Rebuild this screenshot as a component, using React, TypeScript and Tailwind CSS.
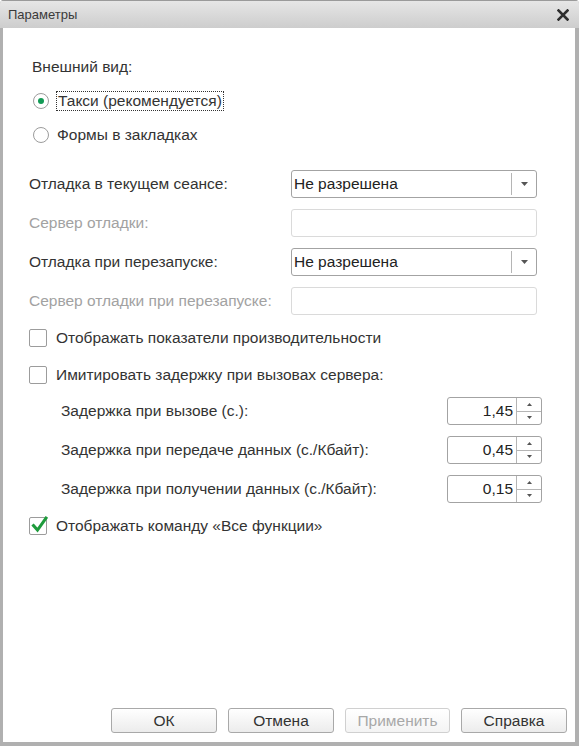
import { ReactNode } from "react";

const font = { fontFamily: '"Liberation Sans", Arial, sans-serif' };

const Radio = ({ checked, label, focused }: { checked?: boolean; label: string; focused?: boolean }) => (
  <div className="flex items-center h-[22px]">
    <span className="w-[16px] h-[16px] rounded-full border border-[#9c9c9c] bg-white flex items-center justify-center">
      {checked && <span className="w-[6px] h-[6px] rounded-full bg-[#129a55]" />}
    </span>
    <span
      className={
        focused
          ? "ml-[7px] px-[1px] border border-dotted border-[#333] leading-[18px]"
          : "ml-[8px] leading-[18px]"
      }
    >
      {label}
    </span>
  </div>
);

const Checkbox = ({ checked, label }: { checked?: boolean; label: string }) => (
  <div className="flex items-center h-[22px]">
    <span className="relative w-[18px] h-[18px] rounded-[2px] border border-[#9c9c9c] bg-white">
      {checked && (
        <svg className="absolute left-[1px] top-[-3px]" width="18" height="19" viewBox="0 0 18 19">
          <path d="M2.5 10.5 L6.5 15 L15 3" fill="none" stroke="#1e9b3c" strokeWidth="3" strokeLinecap="square" />
        </svg>
      )}
    </span>
    <span className="ml-[9px]">{label}</span>
  </div>
);

const Select = ({ value }: { value: string }) => (
  <div className="flex w-[246px] h-[28px] rounded-[3px] border border-[#a3a3a3] bg-white">
    <div className="flex-1 flex items-center pl-[2px] text-[#222]">{value}</div>
    <div className="w-[25px] border-l border-[#b5b5b5] my-[2px] flex items-center justify-center">
      <svg width="7" height="4" viewBox="0 0 7 4">
        <path d="M0 0 H7 L3.5 4 Z" fill="#555" />
      </svg>
    </div>
  </div>
);

const DisabledInput = () => (
  <div className="w-[246px] h-[28px] rounded-[3px] border border-[#dadada] bg-white" />
);

const Row = ({ label, disabled, children }: { label: string; disabled?: boolean; children: ReactNode }) => (
  <div className="flex items-center h-[28px] mt-[11px]">
    <div className={disabled ? "w-[262px] text-[#a2a2a2]" : "w-[262px]"}>{label}</div>
    {children}
  </div>
);

const Spin = ({ label, value }: { label: string; value: string }) => (
  <div className="flex items-center h-[28px] mt-[11px] pl-[32px]">
    <div className="w-[386px]">{label}</div>
    <div className="flex w-[95px] h-[28px] rounded-[3px] border border-[#a3a3a3] bg-white">
      <div className="flex-1 flex items-center justify-end pr-[3px] text-[#222]">{value}</div>
      <div className="w-[25px] border-l border-[#b5b5b5] flex flex-col">
        <div className="flex-1 flex items-center justify-center border-b border-[#b5b5b5]">
          <svg width="5" height="3" viewBox="0 0 5 3">
            <path d="M0 3 H5 L2.5 0 Z" fill="#555" />
          </svg>
        </div>
        <div className="flex-1 flex items-center justify-center">
          <svg width="5" height="3" viewBox="0 0 5 3">
            <path d="M0 0 H5 L2.5 3 Z" fill="#555" />
          </svg>
        </div>
      </div>
    </div>
  </div>
);

const Button = ({ children, disabled }: { children: string; disabled?: boolean }) => (
  <button
    className={
      disabled
        ? "w-[105px] h-[25px] rounded-[3px] border border-[#d0d0d0] bg-gradient-to-b from-white to-[#f4f4f4] text-[#a8a8a8]"
        : "w-[106px] h-[25px] rounded-[3px] border border-[#a9a9a9] bg-gradient-to-b from-white to-[#ececec] text-[#333]"
    }
  >
    {children}
  </button>
);

export default function App() {
  return (
    <div
      className="w-[579px] h-[746px] flex flex-col bg-[#b0b0b0] rounded-t-[4px] overflow-hidden text-[15.5px] text-[#333]"
      style={font}
    >
      <div className="h-[28px] flex items-center justify-between pl-[8px] pr-[10px] bg-gradient-to-b from-[#e6e6e6] to-[#cdcdcd] border-t border-[#9a9a9a]">
        <span className="text-[13px] text-[#3a3a3a]">Параметры</span>
        <svg width="12" height="12" viewBox="0 0 12 12">
          <path d="M1.5 1.5 L10.5 10.5 M10.5 1.5 L1.5 10.5" stroke="#2d2d2d" strokeWidth="2.6" strokeLinecap="square" />
        </svg>
      </div>
      <div className="flex-1 flex flex-col bg-white ml-[3px] mr-[4px] mb-[4px] pl-[26px]">
        <div className="mt-[28px] ml-[3px] h-[22px] flex items-center">Внешний вид:</div>
        <div className="ml-[4px] mt-[12px]">
          <Radio checked focused label="Такси (рекомендуется)" />
        </div>
        <div className="ml-[4px] mt-[12px]">
          <Radio label="Формы в закладках" />
        </div>
        <div className="mt-[13px]" />
        <Row label="Отладка в текущем сеансе:">
          <Select value="Не разрешена" />
        </Row>
        <Row label="Сервер отладки:" disabled>
          <DisabledInput />
        </Row>
        <Row label="Отладка при перезапуске:">
          <Select value="Не разрешена" />
        </Row>
        <Row label="Сервер отладки при перезапуске:" disabled>
          <DisabledInput />
        </Row>
        <div className="mt-[12px]">
          <Checkbox label="Отображать показатели производительности" />
        </div>
        <div className="mt-[15px]">
          <Checkbox label="Имитировать задержку при вызовах сервера:" />
        </div>
        <Spin label="Задержка при вызове (с.):" value="1,45" />
        <Spin label="Задержка при передаче данных (с./Кбайт):" value="0,45" />
        <Spin label="Задержка при получении данных (с./Кбайт):" value="0,15" />
        <div className="mt-[12px]">
          <Checkbox checked label="Отображать команду «Все функции»" />
        </div>
        <div className="flex-1" />
        <div className="flex justify-end gap-[11px] pr-[8px] mb-[9px]">
          <Button>ОК</Button>
          <Button>Отмена</Button>
          <Button disabled>Применить</Button>
          <Button>Справка</Button>
        </div>
      </div>
    </div>
  );
}
